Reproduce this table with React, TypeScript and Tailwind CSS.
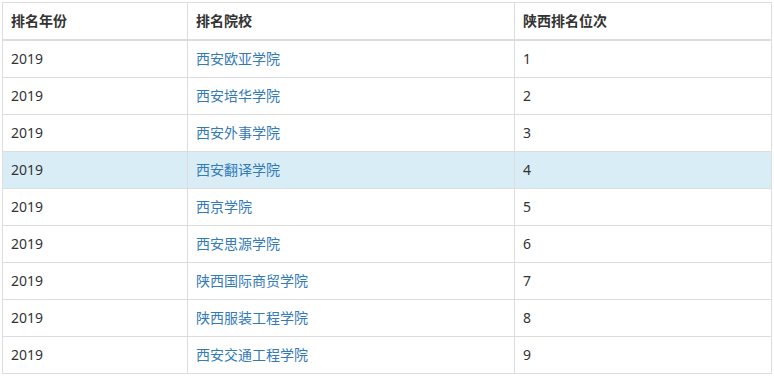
const rows = [
  { year: '2019', school: '西安欧亚学院', rank: 1 },
  { year: '2019', school: '西安培华学院', rank: 2 },
  { year: '2019', school: '西安外事学院', rank: 3 },
  { year: '2019', school: '西安翻译学院', rank: 4, active: true },
  { year: '2019', school: '西京学院', rank: 5 },
  { year: '2019', school: '西安思源学院', rank: 6 },
  { year: '2019', school: '陕西国际商贸学院', rank: 7 },
  { year: '2019', school: '陕西服装工程学院', rank: 8 },
  { year: '2019', school: '西安交通工程学院', rank: 9 },
];

export default function App() {
  return (
    <div
      className="bg-white p-[2px] text-[14px] leading-[20px] text-[#333]"
      style={{ fontFamily: '"Noto Sans", "Noto Sans CJK SC", sans-serif' }}
    >
      <table className="w-[770px] table-fixed border border-[#ddd]">
        <colgroup>
          <col className="w-[185px]" />
          <col className="w-[327px]" />
          <col />
        </colgroup>
        <thead>
          <tr>
            <th className="border border-b-2 border-[#ddd] px-2 py-2 text-left font-bold">排名年份</th>
            <th className="border border-b-2 border-[#ddd] px-2 py-2 text-left font-bold">排名院校</th>
            <th className="border border-b-2 border-[#ddd] px-2 py-2 text-left font-bold">陕西排名位次</th>
          </tr>
        </thead>
        <tbody>
          {rows.map((r) => (
            <tr key={r.rank} className={r.active ? 'bg-[#d9edf7]' : 'bg-white'}>
              <td className="border border-[#ddd] px-2 py-2">{r.year}</td>
              <td className="border border-[#ddd] px-2 py-2">
                <a className="text-[#337ab7]">{r.school}</a>
              </td>
              <td className="border border-[#ddd] px-2 py-2">{r.rank}</td>
            </tr>
          ))}
        </tbody>
      </table>
    </div>
  );
}
